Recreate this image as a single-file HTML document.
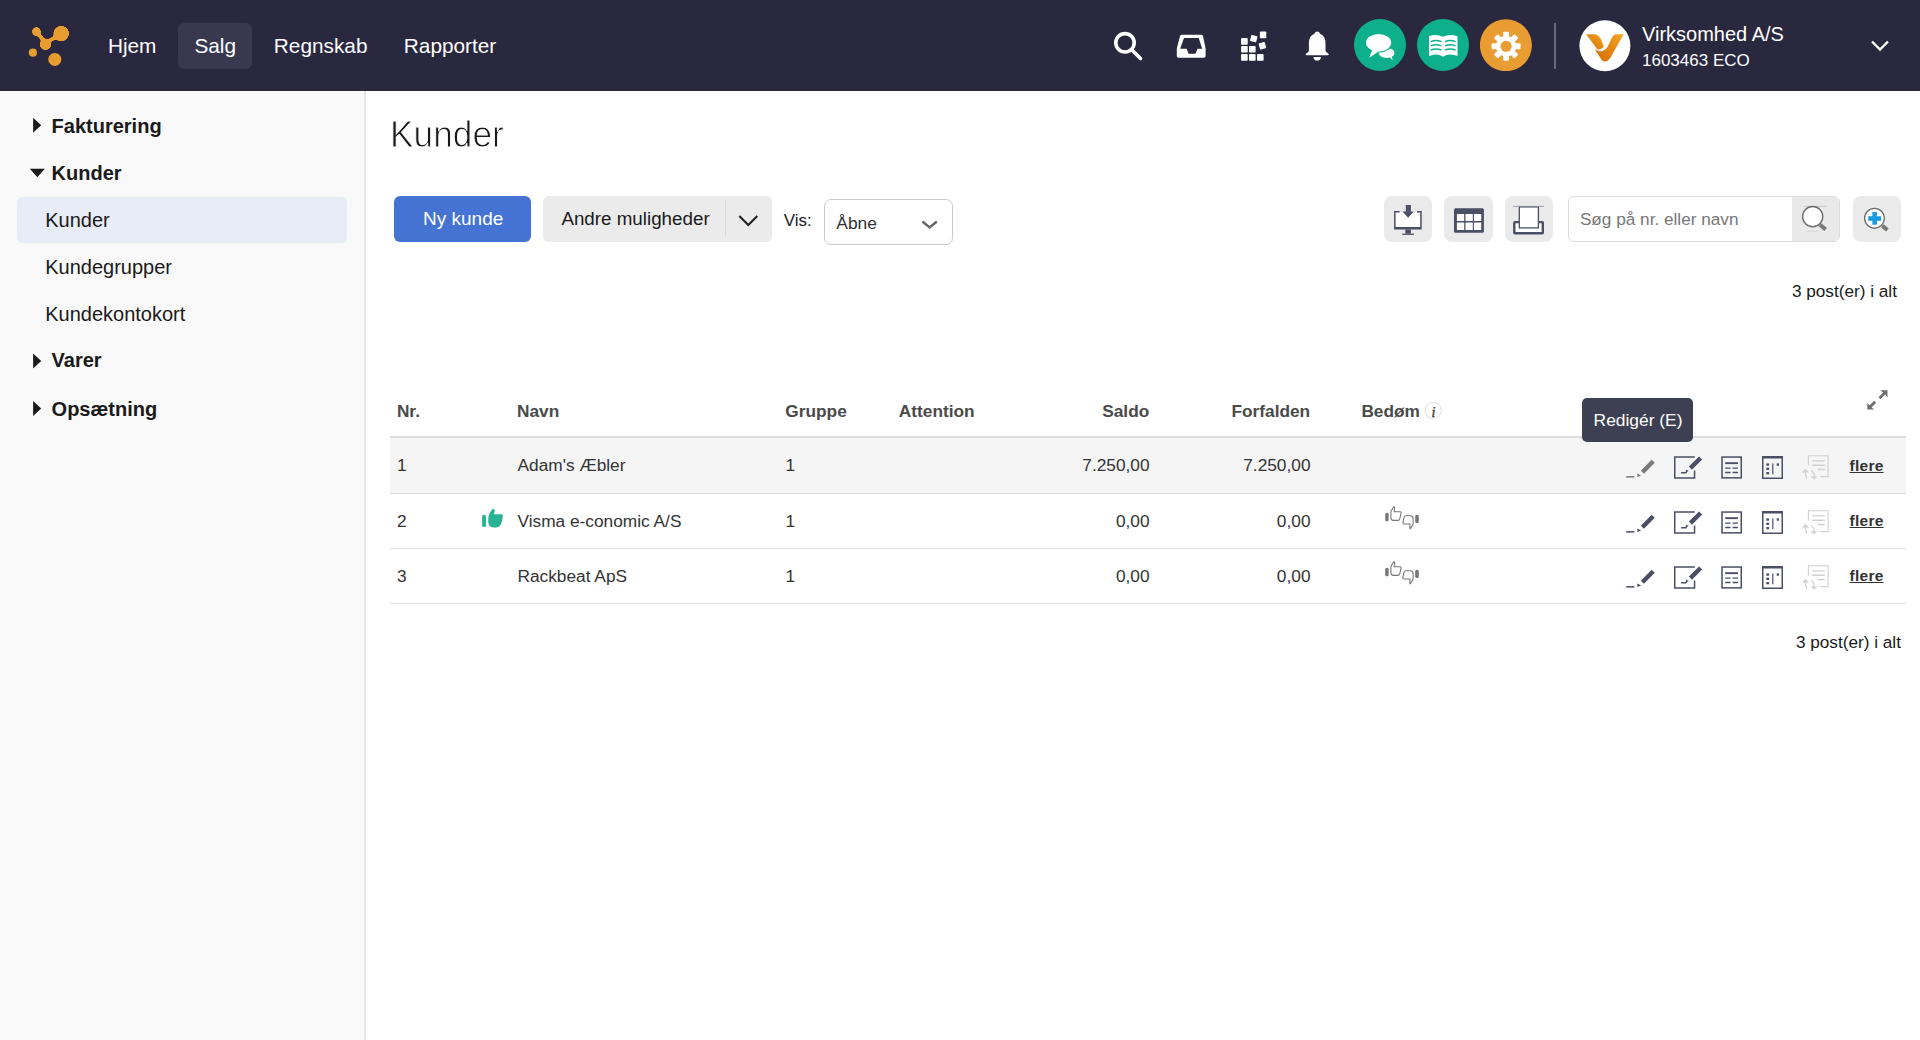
<!DOCTYPE html>
<html><head><meta charset="utf-8">
<style>
*{margin:0;padding:0;box-sizing:border-box}
html,body{width:1920px;height:1040px;overflow:hidden;background:#fff;font-family:"Liberation Sans",sans-serif;color:#222}
.a{position:absolute}
.t{position:absolute;line-height:1;white-space:nowrap}
#hdr{left:0;top:0;width:1920px;height:91px;background:#2a283e}
#side{left:0;top:91px;width:364px;height:949px;background:#f9f9f9;border-right:2px solid #e6e6e6;width:366px}
.nav{color:#fff;font-size:20.8px;margin-top:0.8px}
.sb{font-weight:bold;font-size:20px;color:#1a1a1a}
.si{font-size:20px;color:#1a1a1a}
.th{font-weight:bold;font-size:17.3px;color:#4a4a4a;margin-top:1px}
.td{font-size:17.3px;color:#333;margin-top:1px}
.r{text-align:right}
</style></head><body>
<!-- HEADER -->
<div id="hdr" class="a">
  <!-- logo -->
  <svg class="a" style="left:0;top:0" width="90" height="91" viewBox="0 0 90 91">
    <defs><filter id="goo" x="-20%" y="-20%" width="140%" height="140%"><feGaussianBlur stdDeviation="1.3"/><feColorMatrix values="1 0 0 0 0  0 1 0 0 0  0 0 1 0 0  0 0 0 7 -2.6"/></filter></defs>
    <g fill="#e89d30" filter="url(#goo)">
      <circle cx="36.45" cy="31.6" r="4.3"/>
      <circle cx="61.2" cy="33.6" r="7.7"/>
      <circle cx="45.5" cy="44.4" r="5.6"/>
      <path d="M36.45 31.6 L45.5 43 L61.2 34" stroke="#e89d30" stroke-width="3.6" fill="none" stroke-linejoin="round"/>
    </g>
    <g fill="#e89d30">
      <circle cx="32.9" cy="52.7" r="4.1"/>
      <circle cx="54.8" cy="59.4" r="6.5"/>
    </g>
  </svg>
  <div class="a" style="left:178px;top:23px;width:74px;height:46px;border-radius:6px;background:#3a384e"></div>
  <div class="t nav" style="left:107.9px;top:35.3px">Hjem</div>
  <div class="t nav" style="left:194.4px;top:35.3px">Salg</div>
  <div class="t nav" style="left:273.8px;top:35.3px">Regnskab</div>
  <div class="t nav" style="left:403.8px;top:35.3px">Rapporter</div>

  <!-- right icons -->
  <svg class="a" style="left:1100px;top:20px" width="250" height="50" viewBox="1100 20 250 50">
    <g fill="none" stroke="#fff">
      <circle cx="1125" cy="42.8" r="9.2" stroke-width="3.6"/>
      <line x1="1132" y1="50" x2="1140.5" y2="58.5" stroke-width="3.6" stroke-linecap="round"/>
    </g>
    <path fill="#fff" fill-rule="evenodd" d="M1182 34.7 H1201 Q1202.5 34.7 1203 36 L1205.6 48.5 V56 Q1205.6 57.8 1203.8 57.8 H1178.6 Q1176.8 57.8 1176.8 56 V48.5 L1180 36 Q1180.5 34.7 1182 34.7 Z M1184 38.1 L1180.2 48.7 H1186.6 L1188.6 53.7 H1195.4 L1197.6 48.7 H1202.2 L1198.7 38.1 Z"/>
    <g fill="#fff">
      <rect x="1241.1" y="38.1" width="6.6" height="6.6" rx="0.8"/>
      <rect x="1241.1" y="45.9" width="6.6" height="6.6" rx="0.8"/>
      <rect x="1249" y="45.9" width="6.6" height="6.6" rx="0.8"/>
      <rect x="1241.1" y="54.1" width="6.6" height="6.6" rx="0.8"/>
      <rect x="1249" y="54.1" width="6.6" height="6.6" rx="0.8"/>
      <rect x="1257" y="54.1" width="6.6" height="6.6" rx="0.8"/>
      <rect x="1259.9" y="31.6" width="6.4" height="6.6" rx="0.8"/>
      <rect x="-3.2" y="-3.2" width="6.4" height="6.4" rx="0.8" transform="translate(1253.75 38.6) rotate(15)"/>
      <rect x="-3.2" y="-3.2" width="6.4" height="6.4" rx="0.8" transform="translate(1262.4 45.8) rotate(-15)"/>
    </g>
    <path fill="#fff" d="M1317.2 31.6 Q1319 31.6 1320.3 34 Q1325.5 36 1325.5 43 V50.5 Q1325.7 52.2 1327.6 53 Q1328.8 53.6 1328.8 54.5 Q1328.8 55.2 1327.8 55.2 H1306.6 Q1305.6 55.2 1305.6 54.5 Q1305.6 53.6 1306.8 53 Q1308.7 52.2 1308.9 50.5 V43 Q1308.9 36 1314.1 34 Q1315.4 31.6 1317.2 31.6 Z M1313.4 56.9 H1321 Q1320.6 60.6 1317.2 60.6 Q1313.8 60.6 1313.4 56.9 Z"/>
  </svg>
  <!-- chat circle -->
  <svg class="a" style="left:1354px;top:19px" width="52" height="52" viewBox="0 0 52 52">
    <circle cx="26" cy="26" r="26" fill="#0db08a"/>
    <g fill="#fff">
      <ellipse cx="32.6" cy="34" rx="7.9" ry="5"/>
      <path d="M35 37.5 L38.6 41.2 L37.6 36 Z"/>
      <ellipse cx="24.6" cy="23.75" rx="13.8" ry="9.9" fill="#0db08a"/>
      <ellipse cx="24.6" cy="23.75" rx="12.6" ry="8.75"/>
      <path d="M18.3 30.5 L15.2 38.8 L25 32.3 Z"/>
    </g>
  </svg>
  <!-- book circle -->
  <svg class="a" style="left:1417px;top:19px" width="52" height="52" viewBox="0 0 52 52">
    <circle cx="26" cy="26" r="26" fill="#0db08a"/>
    <path fill="#fff" d="M12 17.25 Q15 16 18.5 16 Q22.5 16 26 17.75 Q29.5 16 33 16 Q37 16 40.5 17.25 V37 Q37 35.5 33 35.5 Q29.5 35.5 26 37.75 Q22.5 35.5 19 35.5 Q15 35.5 12 37 Z"/>
    <g stroke="#0db08a" stroke-width="1.5" fill="none" stroke-linecap="round">
      <path d="M14.3 22.4 Q19 20.6 23.8 22.4 M14.3 26.6 Q19 24.8 23.8 26.6 M14.3 30.8 Q19 29 23.8 30.8"/>
      <path d="M28.5 22.4 Q33.2 20.6 38 22.4 M28.5 26.6 Q33.2 24.8 38 26.6 M28.5 30.8 Q33.2 29 38 30.8"/>
    </g>
  </svg>
  <!-- gear circle -->
  <svg class="a" style="left:1480px;top:19px" width="52" height="52" viewBox="0 0 52 52">
    <circle cx="25.9" cy="26.25" r="26" fill="#e89c31"/>
    <g transform="translate(26.1 27.25)" fill="#fff">
      <circle r="10.2"/>
      <rect x="-2.9" y="-14.5" width="5.8" height="6" rx="1"/>
      <rect x="-2.9" y="-14.5" width="5.8" height="6" rx="1" transform="rotate(45)"/>
      <rect x="-2.9" y="-14.5" width="5.8" height="6" rx="1" transform="rotate(90)"/>
      <rect x="-2.9" y="-14.5" width="5.8" height="6" rx="1" transform="rotate(135)"/>
      <rect x="-2.9" y="-14.5" width="5.8" height="6" rx="1" transform="rotate(180)"/>
      <rect x="-2.9" y="-14.5" width="5.8" height="6" rx="1" transform="rotate(225)"/>
      <rect x="-2.9" y="-14.5" width="5.8" height="6" rx="1" transform="rotate(270)"/>
      <rect x="-2.9" y="-14.5" width="5.8" height="6" rx="1" transform="rotate(315)"/>
      <circle r="5.6" fill="#e89c31"/>
    </g>
  </svg>
  <div class="a" style="left:1554px;top:23px;width:2px;height:46px;background:#6a687c"></div>
  <!-- avatar -->
  <svg class="a" style="left:1578.5px;top:19.5px" width="52" height="52" viewBox="0 0 52 52">
    <defs><linearGradient id="vg" x1="1" y1="0" x2="0" y2="1"><stop offset="0" stop-color="#f5a623"/><stop offset="1" stop-color="#d46a05"/></linearGradient></defs>
    <circle cx="25.9" cy="25.8" r="25.5" fill="#fff"/>
    <path fill="url(#vg)" d="M7.2 14.25 H15.5 Q20 14.5 22.5 20.5 L24.8 26.8 Q22 29.8 18.4 29.5 Z"/>
    <path fill="url(#vg)" d="M36.9 14.25 H44.7 L31.1 38.2 Q28.5 41.8 25.9 41.6 Q23.2 41.5 21.9 38.8 L15.8 29.5 Q20 31.8 23.5 31 Q27 30 28.8 26.5 L32 19.5 Q34 14.5 36.9 14.25 Z"/>
  </svg>
  <div class="t" style="left:1642px;top:23.8px;font-size:20px;color:#fff">Virksomhed A/S</div>
  <div class="t" style="left:1642px;top:52.2px;font-size:17px;color:#fff">1603463 ECO</div>
  <svg class="a" style="left:1868px;top:38px" width="24" height="16" viewBox="0 0 24 16">
    <path d="M4 3.5 L12 11.5 L20 3.5" fill="none" stroke="#fff" stroke-width="2.4"/>
  </svg>
</div>

<!-- SIDEBAR -->
<div id="side" class="a"></div>
<svg class="a" style="left:0;top:91px" width="60" height="340" viewBox="0 91 60 340">
  <g fill="#1a1a1a">
    <path d="M33.1 117.7 L41.2 125.3 L33.1 132.8 Z"/>
    <path d="M29.8 168.8 L44.9 168.8 L37.35 177.2 Z"/>
    <path d="M33.1 353.6 L41.2 361.1 L33.1 368.6 Z"/>
    <path d="M33.1 401 L41.2 408.6 L33.1 416.1 Z"/>
  </g>
</svg>
<div class="t sb" style="left:51.6px;top:115.9px">Fakturering</div>
<div class="t sb" style="left:51.6px;top:163px">Kunder</div>
<div class="a" style="left:17px;top:197px;width:330px;height:46px;border-radius:6px;background:#e8ecf6"></div>
<div class="t si" style="left:45.2px;top:210.2px">Kunder</div>
<div class="t si" style="left:45.2px;top:257.1px">Kundegrupper</div>
<div class="t si" style="left:45.2px;top:303.9px">Kundekontokort</div>
<div class="t sb" style="left:51.6px;top:350.4px">Varer</div>
<div class="t sb" style="left:51.6px;top:399.1px">Opsætning</div>

<!-- MAIN -->
<div class="t" style="left:389.8px;top:117.4px;font-size:36.2px;color:#1a1a1a;-webkit-text-stroke:0.9px #fff;transform:scaleX(0.975);transform-origin:0 0">Kunder</div>


<!-- TOOLBAR -->
<div class="a" style="left:394px;top:196px;width:137px;height:46px;border-radius:6px;background:#4573d3"></div>
<div class="t" style="left:423px;top:208.9px;font-size:19px;color:#fff">Ny kunde</div>
<div class="a" style="left:543px;top:196px;width:229px;height:46px;border-radius:6px;background:#ebebeb"></div>
<div class="a" style="left:725px;top:200px;width:1px;height:37px;background:#d8d8d8"></div>
<div class="t" style="left:561.4px;top:210px;font-size:18.8px;color:#1a1a1a">Andre muligheder</div>
<svg class="a" style="left:735px;top:212px" width="26" height="18" viewBox="735 212 26 18">
  <path d="M739.3 216 L748.3 225 L757.3 216" fill="none" stroke="#222" stroke-width="2"/>
</svg>
<div class="t" style="left:783.8px;top:212.4px;font-size:17px;color:#1a1a1a">Vis:</div>
<div class="a" style="left:824px;top:199px;width:129px;height:46px;border-radius:7px;border:1.5px solid #c9c9c9;background:#fff"></div>
<div class="t" style="left:836.3px;top:214.8px;font-size:17.4px;color:#333">Åbne</div>
<svg class="a" style="left:918px;top:216px" width="24" height="16" viewBox="918 216 24 16">
  <path d="M922.4 221.5 L929.7 227.4 L936.8 221.5" fill="none" stroke="#666" stroke-width="2.4"/>
</svg>

<!-- right toolbar buttons -->
<div class="a" style="left:1384px;top:196px;width:48px;height:46px;border-radius:8px;background:#eaeaea"></div>
<div class="a" style="left:1444px;top:196px;width:49px;height:46px;border-radius:8px;background:#eaeaea"></div>
<div class="a" style="left:1505px;top:196px;width:48px;height:46px;border-radius:8px;background:#eaeaea"></div>
<svg class="a" style="left:1380px;top:190px" width="180" height="60" viewBox="0 0 180 60">
  <!-- download to monitor -->
  <rect x="15" y="22" width="26" height="16" fill="#fff"/>
  <g fill="#4b4f66">
    <path fill-rule="evenodd" d="M14.1 21.1 H19.7 V22.6 H15.6 V37 H40.2 V22.6 H37 V21.1 H41.7 V39.4 H14.1 Z"/>
    <rect x="25.3" y="39.4" width="5.6" height="4.3"/>
    <rect x="22.3" y="43.6" width="11.6" height="1.3"/>
    <rect x="25.8" y="15" width="5.1" height="6.8"/>
    <path d="M22.5 21.6 H33.75 L28.1 27.7 Z"/>
  </g>
  <!-- table -->
  <rect x="76" y="23" width="26" height="18" fill="#fff"/>
  <g fill="#4b4f66">
    <path fill-rule="evenodd" d="M75.5 18.3 H102.4 Q103.9 18.3 103.9 19.8 V41.2 Q103.9 42.7 102.4 42.7 H75.5 Q74 42.7 74 41.2 V19.8 Q74 18.3 75.5 18.3 Z
      M76.9 23.9 V30.9 H84.2 V23.9 Z M85.5 23.9 V30.9 H92.8 V23.9 Z M93.9 23.9 V30.9 H101.25 V23.9 Z
      M76.9 32.6 V40.1 H84.2 V32.6 Z M85.5 32.6 V40.1 H92.8 V32.6 Z M93.9 32.6 V40.1 H101.25 V32.6 Z"/>
  </g>
  <!-- print -->
  <rect x="134.3" y="32.1" width="28.5" height="11.2" rx="0.6" fill="#fff" stroke="#4b4f66" stroke-width="2.4"/>
  <rect x="139.3" y="16.9" width="19.1" height="21" fill="#fff" stroke="#4b4f66" stroke-width="1.3"/>
  <path d="M133.1 16.4 H164" stroke-width="0.8" stroke="#8a8da0"/>
</svg>

<!-- search box -->
<div class="a" style="left:1568px;top:196px;width:272px;height:46px;border-radius:6px;border:1px solid #dcdcdc;background:#fff;overflow:hidden">
  <div class="a" style="left:223px;top:0;width:47px;height:44px;background:#e9e9e9"></div>
</div>
<div class="t" style="left:1579.9px;top:210.9px;font-size:17.2px;color:#777">Søg på nr. eller navn</div>
<svg class="a" style="left:1790px;top:200px" width="50" height="40" viewBox="1790 200 50 40">
  <path d="M1803.4 206.4 H1826.4" stroke="#bdbdbd" stroke-width="0.8"/>
  <path d="M1806.9 231.3 H1817.8" stroke="#cfcfcf" stroke-width="0.8"/>
  <circle cx="1812.7" cy="216.6" r="10.1" fill="#fff" stroke="#6d6d6d" stroke-width="1.4"/>
  <line x1="1820" y1="224.8" x2="1825.6" y2="229.6" stroke="#777" stroke-width="4" stroke-linecap="butt"/>
</svg>
<div class="a" style="left:1853px;top:196px;width:48px;height:46px;border-radius:8px;background:#eaeaea"></div>
<svg class="a" style="left:1853px;top:196px" width="48" height="46" viewBox="1853 196 48 46">
  <circle cx="1874.5" cy="218.3" r="9.9" fill="#fff" stroke="#6d6d6d" stroke-width="1.4"/>
  <line x1="1882.3" y1="225.7" x2="1887.4" y2="230" stroke="#777" stroke-width="4"/>
  <path d="M1872.4 212.1 H1876.9 V216.2 H1881.1 V220.7 H1876.9 V224.8 H1872.4 V220.7 H1868.2 V216.2 H1872.4 Z" fill="#1a9ae0"/>
</svg>
<div class="t" style="left:1791.9px;top:282.9px;font-size:17.2px;color:#1a1a1a">3 post(er) i alt</div>

<!-- TABLE -->
<svg class="a" style="left:1855px;top:380px" width="50" height="40" viewBox="1855 380 50 40">
  <g fill="#6f6f6f">
    <path d="M1880.2 390.2 H1887.5 V396.9 L1885.2 394.6 L1880.5 399.3 L1878.5 397.3 L1883.2 392.6 Z"/>
    <path d="M1867.3 403 L1869.6 405.3 L1874.2 400.7 L1876.2 402.7 L1871.6 407.3 L1874 409.6 H1867.3 Z"/>
  </g>
</svg>
<div class="a" style="left:390px;top:436px;width:1516px;height:2px;background:#dcdcdc"></div>
<div class="a" style="left:390px;top:438px;width:1516px;height:54.5px;background:#f5f5f5"></div>
<div class="a" style="left:390px;top:492.5px;width:1516px;height:1px;background:#dedede"></div>
<div class="a" style="left:390px;top:548.3px;width:1516px;height:1px;background:#dedede"></div>
<div class="a" style="left:390px;top:603.3px;width:1516px;height:1px;background:#dedede"></div>

<div class="t th" style="left:396.9px;top:402.4px">Nr.</div>
<div class="t th" style="left:517px;top:402.4px">Navn</div>
<div class="t th" style="left:785.3px;top:402.4px">Gruppe</div>
<div class="t th" style="left:898.8px;top:402.4px">Attention</div>
<div class="t th r" style="left:1000px;width:149.3px;top:402.4px">Saldo</div>
<div class="t th r" style="left:1160px;width:150.2px;top:402.4px">Forfalden</div>
<div class="t th" style="left:1361.4px;top:402.4px">Bedøm</div>
<svg class="a" style="left:1423px;top:400px" width="21" height="21" viewBox="1423 400 21 21">
  <circle cx="1433.3" cy="410.4" r="8.1" fill="#fff" stroke="#e4e4e4" stroke-width="1.2"/>
  <text x="1431.6" y="416.6" font-family="Liberation Serif" font-style="italic" font-size="14" fill="#333" stroke="#333" stroke-width="0.3">i</text>
</svg>

<div class="t td" style="left:397px;top:456.2px">1</div>
<div class="t td" style="left:517.5px;top:456.2px">Adam's Æbler</div>
<div class="t td" style="left:785.6px;top:456.2px">1</div>
<div class="t td r" style="left:1000px;width:149.6px;top:456.2px">7.250,00</div>
<div class="t td r" style="left:1160px;width:150.5px;top:456.2px">7.250,00</div>

<div class="t td" style="left:397px;top:511.6px">2</div>
<div class="t td" style="left:517.5px;top:511.6px">Visma e-conomic A/S</div>
<div class="t td" style="left:785.6px;top:511.6px">1</div>
<div class="t td r" style="left:1000px;width:149.6px;top:511.6px">0,00</div>
<div class="t td r" style="left:1160px;width:150.5px;top:511.6px">0,00</div>

<div class="t td" style="left:397px;top:567.2px">3</div>
<div class="t td" style="left:517.5px;top:567.2px">Rackbeat ApS</div>
<div class="t td" style="left:785.6px;top:567.2px">1</div>
<div class="t td r" style="left:1000px;width:149.6px;top:567.2px">0,00</div>
<div class="t td r" style="left:1160px;width:150.5px;top:567.2px">0,00</div>

<!-- green thumb -->
<svg class="a" style="left:478px;top:505px" width="30" height="26" viewBox="478 505 30 26">
  <g fill="#2ab394">
    <rect x="482.1" y="514.8" width="3.9" height="12.3" rx="1.95"/>
    <path d="M488.2 521 Q488.2 516 489.5 513.5 L492 509.6 Q493.3 508 494.5 509.6 Q495 510.5 494.6 512 L494 514.2 H501.5 Q503.2 514.4 502.9 516.2 L501.8 521.8 Q500.6 527.5 496 527.5 H493.5 Q488.2 527.5 488.2 521 Z"/>
  </g>
</svg>

<svg width="0" height="0" style="position:absolute"><defs>
<g id="rate">
  <rect x="1385.2" y="512.7" width="3.45" height="8.6" rx="1.6" fill="#777"/>
  <path d="M1393.7 506.8 Q1394.6 506.5 1394.6 507.6 L1394.1 511.8 H1400.2 Q1401.6 512 1401.1 513.2 L1399.8 518.6 Q1399.2 520.4 1397.8 520.4 H1393.2 Q1390.9 520.4 1390.9 517.8 V512.3 Q1390.9 511.6 1391.3 510.8 Z" fill="none" stroke="#777" stroke-width="1.1" stroke-linejoin="round"/>
  <path d="M1405.4 515.7 H1410.6 Q1413.1 515.9 1413.1 518.7 V523.6 Q1413.1 524.3 1412.6 525.1 L1410.6 528.6 Q1409.9 529.2 1409.9 528.2 V524 H1403.9 Q1402.8 523.9 1402.8 523.3 L1403.9 517.6 Q1404.3 515.8 1405.4 515.7 Z" fill="none" stroke="#777" stroke-width="1.1" stroke-linejoin="round"/>
  <rect x="1415.2" y="514.8" width="3.6" height="8.2" rx="1.6" fill="#777"/>
</g>
</defs></svg>
<svg class="a" style="left:1380px;top:500px" width="45" height="35" viewBox="1380 500 45 35"><use href="#rate"/></svg>
<svg class="a" style="left:1380px;top:555px" width="45" height="35" viewBox="1380 500 45 35"><use href="#rate"/></svg>

<svg width="0" height="0" style="position:absolute"><defs>
<g id="ico1d">
  <rect x="6.2" y="26.1" width="8.2" height="1.5"/>
  <path d="M17.3 23.4 L21.2 25.4 L17.3 27.1 Z"/>
  <path d="M22.4 22.3 L33.2 11.2" stroke-width="4.4" stroke="currentColor"/>
</g>
<g id="ico2">
  <path d="M74.8 6.95 H54.75 V28.05 H74.55 V20.4" fill="none" stroke="#4b4f66" stroke-width="1.5"/>
  <path d="M70.4 18.1 L80.6 8" stroke="#4b4f66" stroke-width="4.4"/>
  <path d="M61.1 22.8 H65.8 L66.6 21.5" fill="none" stroke="#4b4f66" stroke-width="1.5"/>
  <path d="M65.8 19.4 L68.9 21 L66.2 22.3 Z" fill="#4b4f66"/>
</g>
<g id="ico34">
  <rect x="102" y="7.05" width="19.25" height="20.8" fill="none" stroke="#4b4f66" stroke-width="1.5"/>
  <rect x="105.2" y="12.2" width="12.8" height="1.9" fill="#4b4f66"/>
  <g stroke="#4b4f66" stroke-width="1.3">
    <path d="M105.2 18.2 H110.6 M112.6 18.2 H118 M105.2 22.5 H110.6 M112.6 22.5 H118"/>
  </g>
  <path d="M142.75 6.9 H162.25 V28.25 H142.75 Z" fill="none" stroke="#4b4f66" stroke-width="1.5"/>
  <rect x="142" y="5.9" width="21" height="2.5" rx="0.5" fill="#4b4f66"/>
  <g fill="#4b4f66">
    <rect x="146.3" y="13.4" width="2.8" height="2.3"/>
    <rect x="146.3" y="17.7" width="2.8" height="2.3"/>
    <rect x="146.3" y="22" width="2.8" height="2.3"/>
    <rect x="152.2" y="13.4" width="1.2" height="10.9"/>
    <rect x="156.7" y="13.4" width="2.3" height="2.3"/>
  </g>
</g>
<g id="ico5">
  <g fill="none" stroke="#d0d0d0" stroke-width="1.1">
    <path d="M188.4 15.5 V5.7 H208.1 V26.6 H200.6"/>
    <path d="M192.2 10.9 H204.8 M192.2 15.3 H204.8 M197.9 19.5 H204.8" stroke-width="1.4"/>
    <path d="M185.4 22 Q185.2 26 186.9 28.3" stroke-width="1.3"/>
    <path d="M191.1 20.5 Q194.2 22 194.2 26.2" stroke-width="1.3"/>
  </g>
  <g fill="#d0d0d0">
    <path d="M182.1 22.5 L185.4 18.8 L189 22.5 Z"/>
    <path d="M190.5 26.2 L197.5 26.2 L194.2 29.6 Z"/>
  </g>
</g>
</defs></svg>
<svg class="a" style="left:1620px;top:450px;color:#7a7a7a" width="215" height="35" viewBox="0 0 215 35"><g fill="#7a7a7a"><use href="#ico1d"/></g><use href="#ico2"/><use href="#ico34"/><use href="#ico5"/></svg>
<div class="t" style="left:1849.6px;top:457.7px;font-size:15.5px;letter-spacing:0.25px;font-weight:bold;color:#333;text-decoration:underline">flere</div>
<svg class="a" style="left:1620px;top:505px;color:#4b4f66" width="215" height="35" viewBox="0 0 215 35"><g fill="#4b4f66"><use href="#ico1d"/></g><use href="#ico2"/><use href="#ico34"/><use href="#ico5"/></svg>
<div class="t" style="left:1849.6px;top:512.7px;font-size:15.5px;letter-spacing:0.25px;font-weight:bold;color:#333;text-decoration:underline">flere</div>
<svg class="a" style="left:1620px;top:560px;color:#4b4f66" width="215" height="35" viewBox="0 0 215 35"><g fill="#4b4f66"><use href="#ico1d"/></g><use href="#ico2"/><use href="#ico34"/><use href="#ico5"/></svg>
<div class="t" style="left:1849.6px;top:567.7px;font-size:15.5px;letter-spacing:0.25px;font-weight:bold;color:#333;text-decoration:underline">flere</div>

<div class="t" style="left:1795.9px;top:634.4px;font-size:17.2px;color:#1a1a1a">3 post(er) i alt</div>
<div class="a" style="left:1582px;top:398px;width:111px;height:44px;border-radius:5px;background:#3d4052"></div>
<div class="t" style="left:1593.6px;top:411.8px;font-size:17.4px;color:#fff">Redigér (E)</div>
</body></html>
